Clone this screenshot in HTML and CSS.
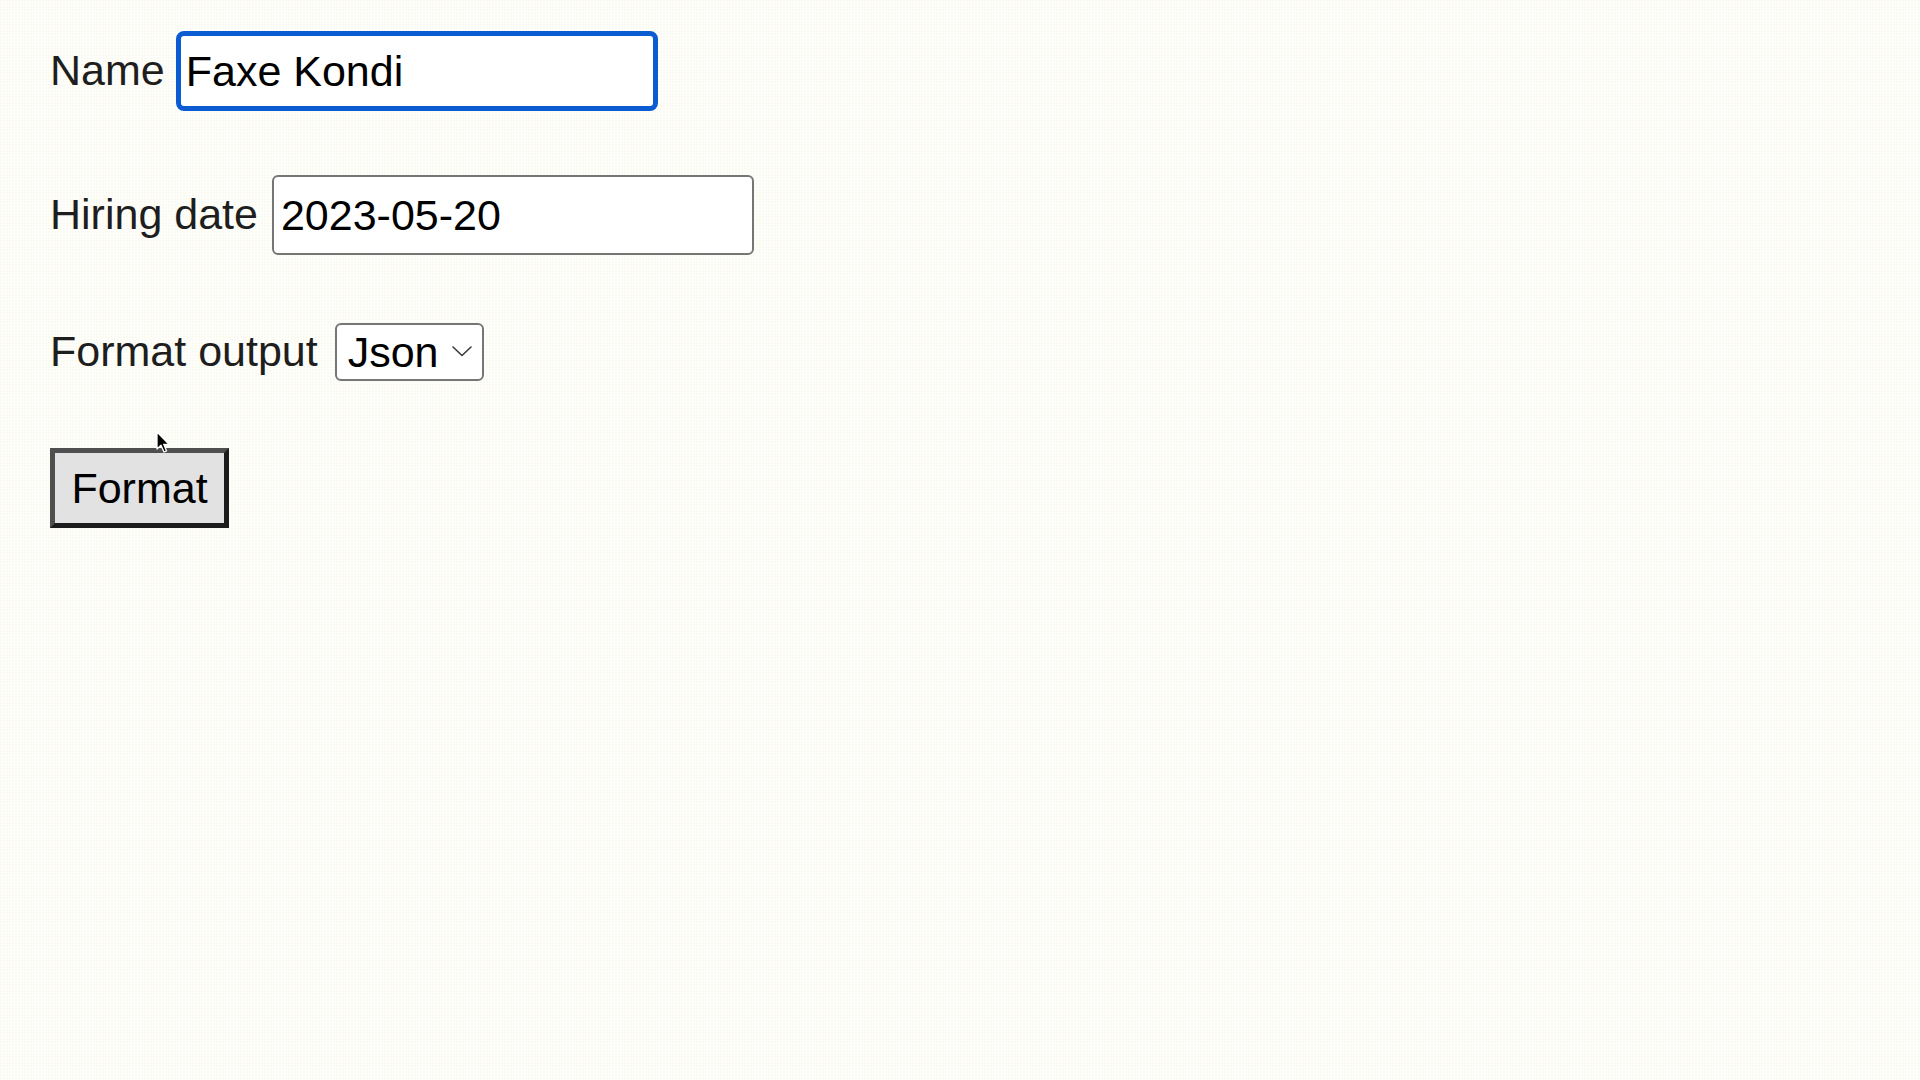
FILE: index.html
```html
<!DOCTYPE html>
<html lang="en">
<head>
<meta charset="utf-8">
<title>Format</title>
<link rel="stylesheet" href="styles.css">
</head>
<body>
<form class="form">
  <div class="field field-first">
    <label class="label" for="name">Name</label>
    <input class="input input-focused" id="name" type="text" value="Faxe Kondi">
  </div>
  <div class="field field-date">
    <label class="label" for="date">Hiring date</label>
    <input class="input" id="date" type="text" value="2023-05-20">
  </div>
  <div class="field field-select">
    <label class="label" for="fmt">Format output</label>
    <span class="select-wrap">
      <select class="select" id="fmt">
        <option>Json</option>
        <option>Xml</option>
      </select>
      <svg class="chevron" width="20" height="11" viewBox="0 0 20 11" aria-hidden="true"><path d="M1 1 L10 9.5 L19 1" fill="none" stroke="#3a3a3a" stroke-width="1.6" stroke-linecap="round" stroke-linejoin="round"/></svg>
    </span>
  </div>
  <div class="actions">
    <button class="button" type="button">Format</button>
    <svg class="cursor" width="16" height="24" viewBox="0 0 16 24" aria-hidden="true"><path d="M1 1 L1 18 L5 14.2 L8 21 L10.6 19.9 L7.7 13.3 L13 13.3 Z" fill="#000" stroke="#fff" stroke-width="1.3" stroke-linejoin="round"/></svg>
  </div>
</form>
</body>
</html>
```
FILE: styles.css
```css
html, body {
  margin: 0;
  padding: 0;
}

body {
  width: 1920px;
  height: 1080px;
  background-color: #fefefe;
  background-image: radial-gradient(circle at 1px 1px, #f6f3cf 0.5px, transparent 0.8px);
  background-size: 3px 3px;
  font-family: "Liberation Sans", Arial, Helvetica, sans-serif;
  color: #222;
}

.form {
  display: flex;
  flex-direction: column;
  align-items: flex-start;
  padding: 31px 0 0 50px;
  position: relative;
}

.field {
  display: flex;
  align-items: center;
  gap: 11px;
}

.field-date {
  margin-top: 64px;
  gap: 14px;
}

.field-select {
  margin-top: 68px;
  gap: 17px;
}

.label {
  font-size: 43px;
  line-height: 1.15;
  color: #1e1e1e;
}

.input {
  box-sizing: border-box;
  width: 482px;
  height: 80px;
  margin: 0;
  padding: 0 7px;
  border: 2px solid #767676;
  border-radius: 6px;
  background: #fff;
  font-family: "Liberation Sans", Arial, Helvetica, sans-serif;
  font-size: 43px;
  color: #000;
  outline: none;
}

.input-focused {
  padding: 0 5px;
  border: 5px solid #0b5bd3;
  border-radius: 8px;
}

.select-wrap {
  position: relative;
  display: inline-block;
}

.select {
  box-sizing: border-box;
  appearance: none;
  -webkit-appearance: none;
  width: 149px;
  height: 58px;
  margin: 0;
  padding: 0 0 0 11px;
  border: 2px solid #767676;
  border-radius: 6px;
  background: #fff;
  font-family: "Liberation Sans", Arial, Helvetica, sans-serif;
  font-size: 43px;
  color: #000;
  display: block;
}

.chevron {
  position: absolute;
  left: 117px;
  top: 23px;
  pointer-events: none;
}

.actions {
  margin-top: 67px;
  position: relative;
}

.button {
  box-sizing: border-box;
  width: 179px;
  height: 80px;
  margin: 0;
  padding: 0;
  border-width: 5px;
  border-style: solid;
  border-color: #4f4f4f #1c1c1c #1c1c1c #4f4f4f;
  background: #e2e2e2;
  font-family: "Liberation Sans", Arial, Helvetica, sans-serif;
  font-size: 43px;
  color: #000;
  line-height: 1;
}

.cursor {
  position: absolute;
  left: 106px;
  top: -17px;
}
```
